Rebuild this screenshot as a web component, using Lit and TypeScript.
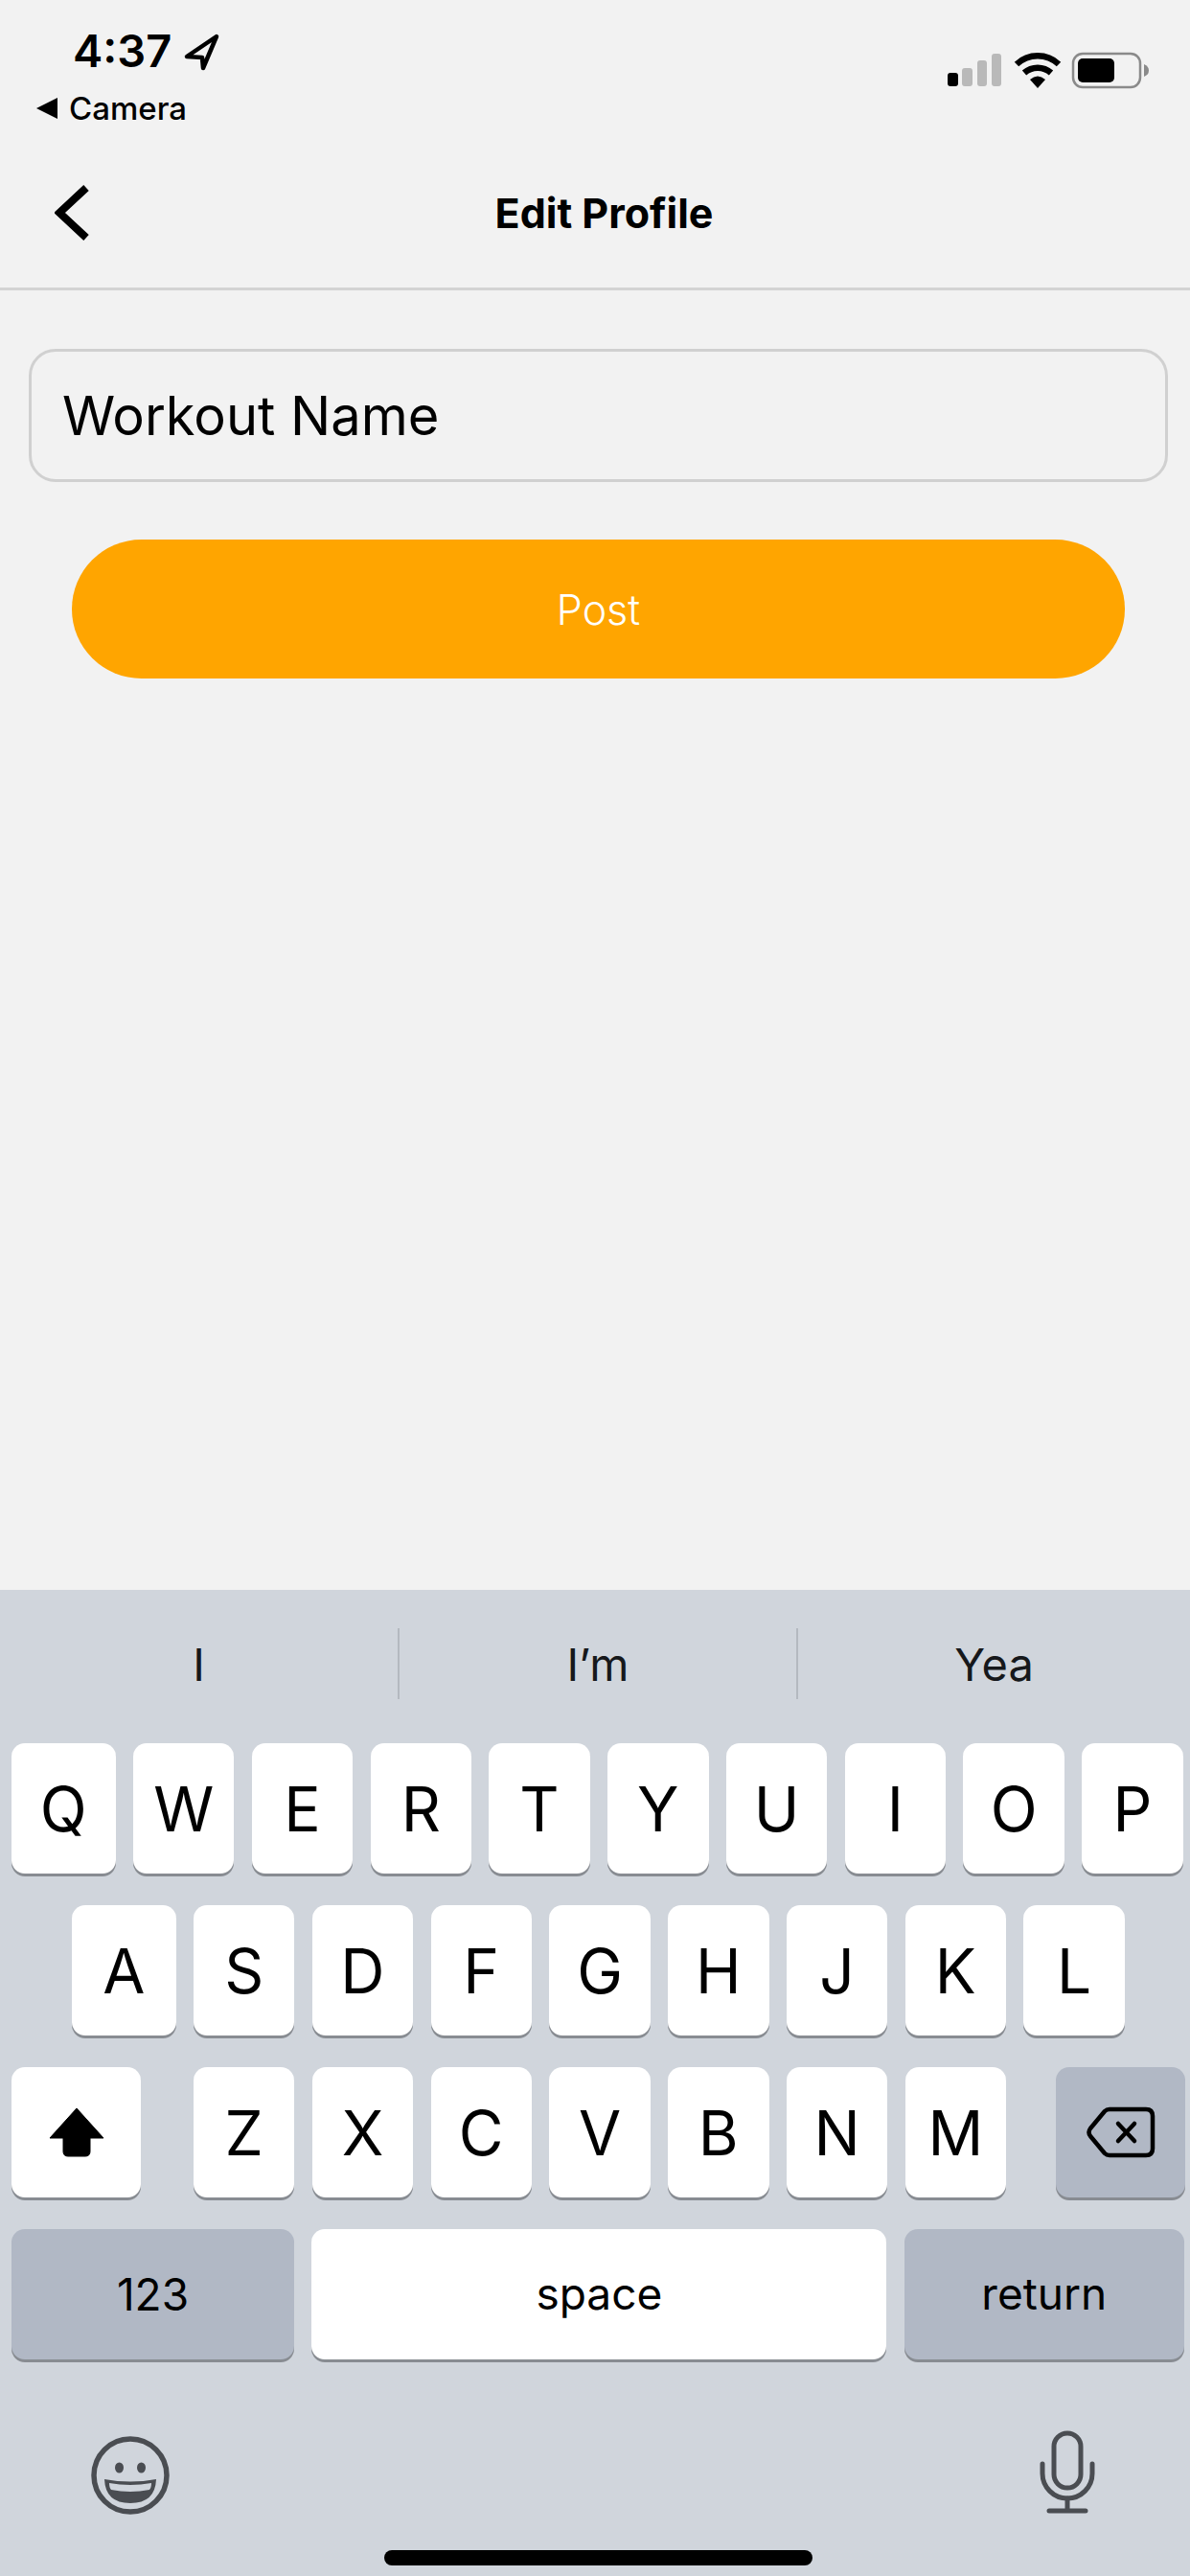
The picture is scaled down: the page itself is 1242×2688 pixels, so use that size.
import { LitElement, html, css, svg } from 'lit';
import { customElement } from 'lit/decorators.js';

const ROW1 = ['Q', 'W', 'E', 'R', 'T', 'Y', 'U', 'I', 'O', 'P'];
const ROW2 = ['A', 'S', 'D', 'F', 'G', 'H', 'J', 'K', 'L'];
const ROW3 = ['Z', 'X', 'C', 'V', 'B', 'N', 'M'];
const SUGGESTIONS = ['I', 'I’m', 'Yea'];

const locationIcon = svg`<svg class="loc" width="40" height="40" viewBox="0 0 40 40">
  <path d="M35 4 L4 25 L20 26 L21 37 Z" fill="none" stroke="#000" stroke-width="4.5" stroke-linejoin="round"/>
</svg>`;

const signalIcon = svg`<svg width="60" height="40" viewBox="0 0 60 40">
  <rect x="1" y="22" width="11" height="14" rx="3" fill="#000"/>
  <rect x="16" y="17" width="11" height="19" rx="3" fill="#b9b9b9"/>
  <rect x="32" y="9" width="10" height="27" rx="3" fill="#b9b9b9"/>
  <rect x="47" y="2" width="10" height="34" rx="3" fill="#b9b9b9"/>
</svg>`;

const wifiIcon = svg`<svg width="50" height="40" viewBox="0 0 50 40">
  <path d="M3 13 A32 32 0 0 1 47 13" fill="none" stroke="#000" stroke-width="6.5"/>
  <path d="M11 22 A21 21 0 0 1 39 22" fill="none" stroke="#000" stroke-width="6.5"/>
  <path d="M17 29 Q25 22 33 29 L25 38 Z" fill="#000"/>
</svg>`;

const batteryIcon = svg`<svg width="84" height="40" viewBox="0 0 84 40">
  <rect x="2" y="2" width="70" height="35" rx="10" fill="none" stroke="#8a8a8a" stroke-width="2.5"/>
  <rect x="7" y="7" width="38" height="25" rx="5" fill="#000"/>
  <path d="M76 13 Q81 15 81 19.5 Q81 24 76 26 Z" fill="#8a8a8a"/>
</svg>`;

const backIcon = svg`<svg width="36" height="58" viewBox="0 0 36 58">
  <path d="M33 3 L5 29 L33 55" fill="none" stroke="#000" stroke-width="8"/>
</svg>`;

const shiftIcon = svg`<svg width="58" height="52" viewBox="0 0 58 52">
  <path d="M29 1 L57 32 H43 V46 Q43 51 38 51 H20 Q15 51 15 46 V32 H1 Z" fill="#000" stroke="#000" stroke-width="1" stroke-linejoin="round"/>
</svg>`;

const deleteIcon = svg`<svg width="72" height="54" viewBox="0 0 72 54">
  <path d="M24 3 H62 Q69 3 69 10 V44 Q69 51 62 51 H24 Q21 51 19 49 L4 31 Q1 27 4 23 L19 5 Q21 3 24 3 Z" fill="none" stroke="#000" stroke-width="4.5" stroke-linejoin="round"/>
  <path d="M33 18 L50 36 M50 18 L33 36" stroke="#000" stroke-width="4.5" stroke-linecap="round"/>
</svg>`;

const emojiIcon = svg`<svg width="84" height="90" viewBox="0 0 84 90">
  <circle cx="42" cy="48" r="38" fill="none" stroke="#4a4d52" stroke-width="5.5"/>
  <ellipse cx="30.5" cy="40" rx="4.5" ry="5.5" fill="#4a4d52"/>
  <ellipse cx="53.5" cy="40" rx="4.5" ry="5.5" fill="#4a4d52"/>
  <path d="M15 52 Q42 57 69 52 Q68 77 42 77 Q16 77 15 52 Z" fill="#4a4d52"/>
  <path d="M20 56 Q42 60 64 56 Q64 61 62 63 Q42 67 22 63 Q20 61 20 56 Z" fill="#d0d5dc"/>
</svg>`;

const micIcon = svg`<svg width="62" height="90" viewBox="0 0 62 90">
  <rect x="17" y="4" width="28" height="57" rx="14" fill="none" stroke="#4a4d52" stroke-width="5"/>
  <path d="M5 36 V46 A26 26 0 0 0 57 46 V36" fill="none" stroke="#4a4d52" stroke-width="5" stroke-linecap="round"/>
  <path d="M31 72 V85 M12 85 H50" fill="none" stroke="#4a4d52" stroke-width="5" stroke-linecap="round"/>
</svg>`;

@customElement('app-root')
export class AppRoot extends LitElement {
  static styles = css`
    :host {
      display: flex;
      flex-direction: column;
      width: 1242px;
      height: 2688px;
      background: #f2f2f2;
      font-family: Inter, 'Liberation Sans', sans-serif;
      color: #000;
      overflow: hidden;
    }
    .status {
      display: flex;
      justify-content: space-between;
      height: 144px;
      flex: none;
    }
    .status-left {
      padding: 24px 0 0 38px;
    }
    .time-row {
      display: flex;
      align-items: center;
      padding-left: 38px;
      height: 58px;
      gap: 12px;
    }
    .time {
      font-size: 47px;
      font-weight: 600;
      line-height: 58px;
    }
    .loc {
      margin-top: 1px;
    }
    .camera-row {
      display: flex;
      align-items: center;
      gap: 12px;
      margin-top: 11px;
      height: 40px;
    }
    .camera-tri {
      width: 0;
      height: 0;
      border-style: solid;
      border-width: 11px 22px 11px 0;
      border-color: transparent #000 transparent transparent;
    }
    .camera {
      font-size: 33px;
      font-weight: 500;
      line-height: 40px;
    }
    .status-right {
      display: flex;
      align-items: flex-start;
      gap: 10px;
      padding: 54px 40px 0 0;
    }
    .nav {
      display: grid;
      grid-template-columns: 1fr auto 1fr;
      align-items: center;
      height: 156px;
      padding: 0 38px 0 57px;
      border-bottom: 3px solid #d3d3d3;
      flex: none;
    }
    .back {
      display: flex;
    }
    .title {
      font-size: 43px;
      font-weight: 700;
    }
    .input {
      display: flex;
      align-items: center;
      box-sizing: border-box;
      height: 139px;
      margin: 61px 23px 0 30px;
      padding-left: 32px;
      border: 3px solid #d0d0d0;
      border-radius: 28px;
      font-size: 56px;
      flex: none;
    }
    .post {
      display: flex;
      align-items: center;
      justify-content: center;
      width: 1099px;
      height: 145px;
      margin: 60px 0 0 75px;
      border-radius: 73px;
      background: #ffa500;
      color: #fff;
      font-size: 43px;
      font-weight: 300;
      flex: none;
    }
    .keyboard {
      margin-top: auto;
      height: 1029px;
      background: #d0d5dc;
      flex: none;
      box-sizing: border-box;
      padding-top: 40px;
    }
    .suggestions {
      display: grid;
      grid-template-columns: 415px 416px 411px;
      height: 74px;
      margin-bottom: 46px;
    }
    .suggestion {
      display: flex;
      align-items: center;
      justify-content: center;
      font-size: 47px;
      font-weight: 400;
      color: #16181b;
    }
    .suggestion + .suggestion {
      border-left: 2px solid #b4b9c0;
    }
    .row {
      display: flex;
      gap: 18.4px;
      height: 136px;
      margin-bottom: 33px;
      padding-left: 12px;
    }
    .row.home {
      padding-left: 75px;
    }
    .key {
      display: flex;
      align-items: center;
      justify-content: center;
      width: 105.4px;
      flex: none;
      background: #fff;
      border-radius: 14px;
      box-shadow: 0 3px 0 #888c92;
      font-size: 64px;
      font-weight: 400;
    }
    .key.first {
      width: 108.6px;
    }
    .key.shift {
      width: 135px;
      margin-right: 36.6px;
    }
    .key.del {
      width: 135px;
      margin-left: 33.6px;
      background: #b1b8c5;
    }
    .key.num {
      width: 295px;
      background: #b1b8c5;
      font-size: 46px;
    }
    .key.space {
      width: 600px;
      font-size: 46px;
      padding-bottom: 2px;
      box-sizing: border-box;
    }
    .key.ret {
      width: 292px;
      background: #b1b8c5;
      font-size: 46px;
      padding-bottom: 2px;
      box-sizing: border-box;
    }
    .tools {
      display: flex;
      justify-content: space-between;
      height: 90px;
      margin-top: 73px;
      padding: 0 97px 0 94px;
    }
    .homebar {
      width: 447px;
      height: 16px;
      margin: 36px 0 0 401px;
      border-radius: 8px;
      background: #000;
    }
  `;

  render() {
    return html`
      <div class="status">
        <div class="status-left">
          <div class="time-row"><span class="time">4:37</span>${locationIcon}</div>
          <div class="camera-row"><span class="camera-tri"></span><span class="camera">Camera</span></div>
        </div>
        <div class="status-right">${signalIcon}${wifiIcon}${batteryIcon}</div>
      </div>
      <div class="nav">
        <div class="back">${backIcon}</div>
        <div class="title">Edit Profile</div>
        <div></div>
      </div>
      <div class="input">Workout Name</div>
      <div class="post">Post</div>
      <div class="keyboard">
        <div class="suggestions">
          ${SUGGESTIONS.map((s) => html`<div class="suggestion">${s}</div>`)}
        </div>
        <div class="row">
          ${ROW1.map((k, i) => html`<div class="key ${i === 0 ? 'first' : ''}">${k}</div>`)}
        </div>
        <div class="row home">
          ${ROW2.map((k, i) => html`<div class="key ${i === 0 ? 'first' : ''}">${k}</div>`)}
        </div>
        <div class="row">
          <div class="key shift">${shiftIcon}</div>
          ${ROW3.map((k) => html`<div class="key">${k}</div>`)}
          <div class="key del">${deleteIcon}</div>
        </div>
        <div class="row">
          <div class="key num">123</div>
          <div class="key space">space</div>
          <div class="key ret">return</div>
        </div>
        <div class="tools">${emojiIcon}${micIcon}</div>
        <div class="homebar"></div>
      </div>
    `;
  }
}
